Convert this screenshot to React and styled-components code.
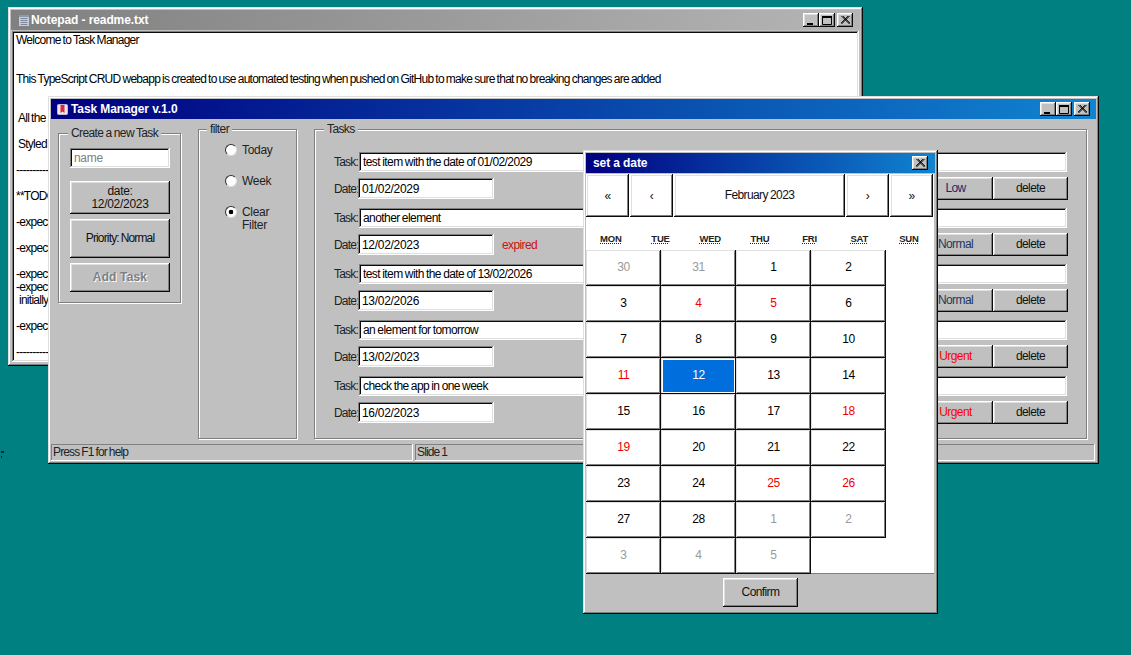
import React from "react";
import styled, { createGlobalStyle, css } from "styled-components";

const raised = css`
  box-shadow: inset -1px -1px #0a0a0a, inset 1px 1px #fff, inset -2px -2px #808080, inset 2px 2px #dfdfdf;
`;

const sunken = css`
  box-shadow: inset -1px -1px #fff, inset 1px 1px #808080, inset -2px -2px #dfdfdf, inset 2px 2px #0a0a0a;
`;

const GlobalStyle = createGlobalStyle`
  html, body {
    margin: 0;
    padding: 0;
    height: 100%;
    overflow: hidden;
  }
  body {
    font-family: "Liberation Sans", Arial, sans-serif;
    font-size: 12px;
    letter-spacing: -0.6px;
    word-spacing: -0.6px;
    color: #000;
  }
  button, input, legend, fieldset {
    font: inherit;
    letter-spacing: inherit;
    word-spacing: inherit;
  }
`;

const Desktop = styled.div`
  position: relative;
  width: 1131px;
  height: 655px;
  background: #008080;
  overflow: hidden;
`;

const Speck = styled.i`
  position: absolute;
  left: 1px;
  top: 451px;
  width: 1px;
  height: 7px;
  border-top: 2px dotted #123;
  border-bottom: 2px solid #123;
  box-sizing: border-box;
`;

const Window = styled.section`
  position: absolute;
  left: ${(p) => p.$x}px;
  top: ${(p) => p.$y}px;
  width: ${(p) => p.$w}px;
  height: ${(p) => p.$h}px;
  box-sizing: border-box;
  padding: 3px;
  display: flex;
  flex-direction: column;
  background: #c0c0c0;
  box-shadow: inset -1px -1px #0a0a0a, inset 1px 1px #dfdfdf, inset -2px -2px #808080, inset 2px 2px #fff;
`;

const TitleBar = styled.header`
  flex: none;
  height: 20px;
  display: flex;
  align-items: center;
  padding: 0 ${(p) => p.$end || 6}px 0 6px;
  background: ${(p) =>
    p.$inactive
      ? "linear-gradient(90deg, #808080, #b5b5b5)"
      : "linear-gradient(90deg, #000080, #1084d0)"};
  color: #fff;
`;

const TitleText = styled.span`
  flex: 1;
  padding-left: ${(p) => p.$inset || 0}px;
  font-weight: bold;
  letter-spacing: -0.1px;
  word-spacing: 0;
  white-space: nowrap;
`;

const NotepadIcon = styled.svg`
  flex: none;
  width: 10px;
  height: 11px;
  margin: 1px 2px 0 2px;
`;

const ManagerIcon = styled.svg`
  flex: none;
  width: 11px;
  height: 11px;
  margin-right: 3px;
`;

const ControlGroup = styled.div`
  display: flex;
  align-items: center;
`;

const ControlButton = styled.button`
  width: 16px;
  height: 14px;
  padding: 0;
  margin-left: ${(p) => (p.$close ? "2px" : "0")};
  border: 0;
  display: flex;
  align-items: center;
  justify-content: center;
  background: #c0c0c0;
  ${raised}
`;

const MinIcon = () => (
  <svg width="10" height="9" viewBox="0 0 10 9">
    <rect x="1" y="7" width="6" height="2" fill="#000" />
  </svg>
);

const MaxIcon = () => (
  <svg width="10" height="9" viewBox="0 0 10 9">
    <path d="M0.5 1.5h9v7h-9z" fill="none" stroke="#000" />
    <rect x="0" y="0" width="10" height="2" fill="#000" />
  </svg>
);

const CloseIcon = () => (
  <svg width="9" height="8" viewBox="0 0 9 8">
    <path d="M0.5 0 L8.5 8 M8.5 0 L0.5 8 M1.8 0 L9 7.2 M7.2 0 L0 7.2" stroke="#000" strokeWidth="1" fill="none" />
  </svg>
);

const WindowControls = ({ onlyClose }) => (
  <ControlGroup>
    {!onlyClose && (
      <ControlButton aria-label="minimize">
        <MinIcon />
      </ControlButton>
    )}
    {!onlyClose && (
      <ControlButton aria-label="maximize">
        <MaxIcon />
      </ControlButton>
    )}
    <ControlButton $close={!onlyClose} aria-label="close">
      <CloseIcon />
    </ControlButton>
  </ControlGroup>
);

/* notepad */
const NotepadBody = styled.div`
  flex: 1;
  margin: 1px 1px 1px 1px;
  padding: 3px 4px 0;
  background: #fff;
  overflow: hidden;
  letter-spacing: -0.74px;
  ${sunken}
`;

const NoteLine = styled.div`
  height: 13px;
  line-height: 13px;
  padding-left: ${(p) => p.$indent || 0}px;
  white-space: pre;
`;

const noteLines = [
  ["Welcome to Task Manager"],
  [""],
  [""],
  ["This TypeScript CRUD webapp is created to use automated testing when pushed on GitHub to make sure that no breaking changes are added"],
  [""],
  [""],
  ["All the", 2],
  [""],
  ["Styled", 2],
  [""],
  ["----------------------"],
  [""],
  ["**TODO"],
  [""],
  ["-expect"],
  [""],
  ["-expect"],
  [""],
  ["-expect"],
  ["-expect"],
  ["initially", 3],
  [""],
  ["-expect"],
  [""],
  ["----------------------"],
];

/* task manager */
const ManagerBody = styled.div`
  flex: 1;
  min-height: 0;
  display: flex;
  gap: 17px;
  align-items: stretch;
  padding: 3px 0 5px 7px;
`;

const Group = styled.fieldset`
  margin: 0;
  min-width: 0;
  box-sizing: border-box;
  border: 1px solid #808080;
  box-shadow: 1px 1px 0 #fff, inset 1px 1px 0 #fff;
`;

const GroupLegend = styled.legend`
  margin-left: ${(p) => p.$offset}px;
  padding: 0 3px;
  height: 14px;
  line-height: 14px;
  white-space: nowrap;
  background: #c0c0c0;
  color: #222;
`;

const CreateGroup = styled(Group)`
  align-self: flex-start;
  width: 123px;
  margin-top: 4px;
  padding: 8px 10px 10px 11px;
  display: flex;
  flex-direction: column;
`;

const FilterGroup = styled(Group)`
  width: 99px;
  padding: 8px 0 0 26px;
`;

const TasksGroup = styled(Group)`
  width: 773px;
  padding: 16px 19px 0 19px;
`;

const Field = styled.input`
  box-sizing: border-box;
  display: block;
  border: 0;
  outline: 0;
  height: ${(p) => p.$height || 20}px;
  padding: 0 4px;
  background: #fff;
  color: #000;
  ${sunken}
  &::placeholder {
    color: #808080;
    opacity: 1;
  }
`;

const NameField = styled(Field)`
  width: 100px;
  margin: 0 0 13px;
  letter-spacing: -0.3px;
`;

const Button = styled.button`
  box-sizing: border-box;
  border: 0;
  padding: 0;
  height: ${(p) => p.$height || 23}px;
  width: ${(p) => p.$width || 75}px;
  background: #c0c0c0;
  color: ${(p) => p.$ink || "#111"};
  line-height: 13px;
  text-align: center;
  ${raised}
`;

const SideButton = styled(Button)`
  width: 100px;
  margin-bottom: 5px;
  letter-spacing: ${(p) => (p.$digits ? "-0.3px" : "-0.85px")};
  &:last-child {
    margin-bottom: 0;
  }
`;

const AddButton = styled(SideButton)`
  color: #808080;
  font-weight: bold;
  letter-spacing: 0.15px;
  word-spacing: 0;
  text-shadow: 1px 1px 0 #fff;
`;

const RadioList = styled.div`
  display: flex;
  flex-direction: column;
  gap: 18px;
`;

const RadioRow = styled.label`
  display: flex;
  align-items: flex-start;
  gap: 5px;
  line-height: 13px;
  letter-spacing: -0.3px;
  color: #222;
`;

const RadioDot = styled.input`
  appearance: none;
  flex: none;
  width: 12px;
  height: 12px;
  margin: 0;
  border-radius: 50%;
  border: 1px solid;
  border-color: #303030 #dfdfdf #dfdfdf #303030;
  background: ${(p) =>
    p.$on ? "radial-gradient(circle, #000 0 2px, #fff 2.6px)" : "#fff"};
`;

const RadioText = styled.span`
  width: 36px;
`;

const TaskList = styled.div`
  display: flex;
  flex-direction: column;
  gap: 8px;
`;

const TaskRow = styled.div`
  display: flex;
  flex-direction: column;
  gap: 5px;
`;

const TaskLine = styled.div`
  display: flex;
  align-items: center;
`;

const FieldLabel = styled.label`
  flex: none;
  width: ${(p) => p.$width}px;
  letter-spacing: -0.8px;
  color: #222;
`;

const TaskField = styled(Field)`
  flex: 1;
  min-width: 0;
  letter-spacing: -0.57px;
`;

const DateField = styled(Field)`
  flex: none;
  width: 136px;
  letter-spacing: -0.3px;
`;

const Expired = styled.span`
  margin-left: 8px;
  color: #cc1111;
`;

const RowActions = styled.div`
  margin: 0 -1px 0 auto;
  display: flex;
`;

const StatusBar = styled.footer`
  flex: none;
  height: 17px;
  margin-right: 1px;
  display: flex;
  gap: 2px;
`;

const StatusPanel = styled.div`
  flex: ${(p) => (p.$grow ? "1" : "none")};
  width: ${(p) => (p.$grow ? "auto" : "362px")};
  box-sizing: border-box;
  padding-left: 2px;
  line-height: 17px;
  letter-spacing: -0.85px;
  color: #222;
  box-shadow: inset -1px -1px #fff, inset 1px 1px #808080;
`;

/* date dialog */
const Calendar = styled.div`
  flex: none;
  height: 400px;
  margin: 1px 1px 0 0;
  background: #fff;
  border-bottom: 1px solid #808080;
  box-sizing: border-box;
  display: flex;
  flex-direction: column;
`;

const CalendarNav = styled.nav`
  flex: none;
  height: 43px;
  display: flex;
  gap: 1px;
`;

const NavButton = styled.button`
  flex: none;
  width: ${(p) => (p.$label ? "171px" : "43px")};
  border: 0;
  padding: ${(p) => (p.$label ? "0 0 2px" : "1px 0 0")};
  background: #fff;
  color: #111;
  ${raised}
`;

const WeekRow = styled.div`
  flex: none;
  display: grid;
  grid-template-columns: repeat(7, 49.7px);
  height: 33px;
  align-items: end;
`;

const WeekDay = styled.abbr`
  justify-self: center;
  margin-bottom: 6px;
  font-size: 9.5px;
  font-weight: bold;
  letter-spacing: -0.2px;
  line-height: 11px;
  text-transform: uppercase;
  text-decoration: underline dotted;
  color: #222;
`;

const DayGrid = styled.div`
  display: grid;
  grid-template-columns: repeat(4, 75px);
  grid-auto-rows: 36px;
`;

const DayTile = styled.button`
  border: 0;
  padding: 0 0 3px;
  letter-spacing: -0.4px;
  background: ${(p) => (p.$selected ? "#006edc" : "#fff")};
  color: ${(p) =>
    p.$selected ? "#fff" : p.$weekend ? "#f00000" : p.$muted ? "#999" : "#000"};
  ${(p) =>
    p.$selected
      ? "box-shadow: inset -1px -1px #0a0a0a, inset 1px 1px #dfdfdf, inset -2px -2px #fff, inset 2px 2px #fff;"
      : "box-shadow: inset -1px -1px #0a0a0a, inset 1px 1px #dfdfdf, inset -2px -2px #808080, inset 2px 2px #fff;"}
`;

const DialogFooter = styled.div`
  flex: 1;
  display: flex;
  justify-content: center;
  padding-top: 4px;
`;

const weekDays = ["Mon", "Tue", "Wed", "Thu", "Fri", "Sat", "Sun"];

const days = [
  [30, "muted"], [31, "muted"], [1], [2],
  [3], [4, "weekend"], [5, "weekend"], [6],
  [7], [8], [9], [10],
  [11, "weekend"], [12, "selected"], [13], [14],
  [15], [16], [17], [18, "weekend"],
  [19, "weekend"], [20], [21], [22],
  [23], [24], [25, "weekend"], [26, "weekend"],
  [27], [28], [1, "muted"], [2, "muted"],
  [3, "muted"], [4, "muted"], [5, "muted"],
];

const tasks = [
  { name: "test item with the date of 01/02/2029", date: "01/02/2029", priority: "Low", ink: "#1a2a6a" },
  { name: "another element", date: "12/02/2023", priority: "Normal", ink: "#1f3560", expired: true },
  { name: "test item with the date of 13/02/2026", date: "13/02/2026", priority: "Normal", ink: "#1f3560" },
  { name: "an element for tomorrow", date: "13/02/2023", priority: "Urgent", ink: "#ff0000" },
  { name: "check the app in one week", date: "16/02/2023", priority: "Urgent", ink: "#ff0000" },
];

const NotepadGlyph = () => (
  <NotepadIcon viewBox="0 0 10 11">
    <rect x="0" y="0" width="10" height="11" fill="#c5cfdc" />
    <rect x="0" y="0" width="10" height="2" fill="#8d99ad" />
    <path d="M1.5 3.5h7M1.5 5.5h7M1.5 7.5h7M1.5 9.5h7" stroke="#7d889b" strokeWidth="1" />
  </NotepadIcon>
);

const ManagerGlyph = () => (
  <ManagerIcon viewBox="0 0 11 11">
    <rect x="0.5" y="0.5" width="10" height="10" rx="1" fill="#e9e9ee" stroke="#b9b9d0" />
    <path d="M3.5 1h4v8l-2-1.5-2 1.5z" fill="#e0243a" />
  </ManagerIcon>
);

export default function App() {
  return (
    <Desktop>
      <GlobalStyle />
      <Speck />

      <Window $x={8} $y={7} $w={855} $h={359}>
        <TitleBar $inactive $end={7}>
          <NotepadGlyph />
          <TitleText>Notepad - readme.txt</TitleText>
          <WindowControls />
        </TitleBar>
        <NotepadBody>
          {noteLines.map(([text, indent], i) => (
            <NoteLine key={i} $indent={indent}>
              {text}
            </NoteLine>
          ))}
        </NotepadBody>
      </Window>

      <Window $x={48} $y={96} $w={1051} $h={368}>
        <TitleBar>
          <ManagerGlyph />
          <TitleText>Task Manager v.1.0</TitleText>
          <WindowControls />
        </TitleBar>
        <ManagerBody>
          <CreateGroup>
            <GroupLegend $offset={-2}>Create a new Task</GroupLegend>
            <NameField placeholder="name" />
            <SideButton $height={33} $digits>
              date:
              <br />
              12/02/2023
            </SideButton>
            <SideButton $height={39}>Priority: Normal</SideButton>
            <AddButton $height={29} disabled>
              Add Task
            </AddButton>
          </CreateGroup>

          <FilterGroup>
            <GroupLegend $offset={-18}>filter</GroupLegend>
            <RadioList>
              <RadioRow>
                <RadioDot type="radio" name="filter" />
                <RadioText>Today</RadioText>
              </RadioRow>
              <RadioRow>
                <RadioDot type="radio" name="filter" />
                <RadioText>Week</RadioText>
              </RadioRow>
              <RadioRow>
                <RadioDot type="radio" name="filter" $on />
                <RadioText>Clear Filter</RadioText>
              </RadioRow>
            </RadioList>
          </FilterGroup>

          <TasksGroup>
            <GroupLegend $offset={-10}>Tasks</GroupLegend>
            <TaskList>
              {tasks.map((task) => (
                <TaskRow key={task.name}>
                  <TaskLine>
                    <FieldLabel $width={25}>Task:</FieldLabel>
                    <TaskField defaultValue={task.name} />
                  </TaskLine>
                  <TaskLine>
                    <FieldLabel $width={24}>Date:</FieldLabel>
                    <DateField $height={21} defaultValue={task.date} />
                    {task.expired && <Expired>expired</Expired>}
                    <RowActions>
                      <Button $ink={task.ink}>{task.priority}</Button>
                      <Button>delete</Button>
                    </RowActions>
                  </TaskLine>
                </TaskRow>
              ))}
            </TaskList>
          </TasksGroup>
        </ManagerBody>
        <StatusBar>
          <StatusPanel>Press F1 for help</StatusPanel>
          <StatusPanel $grow>Slide 1</StatusPanel>
        </StatusBar>
      </Window>

      <Window $x={583} $y={150} $w={355} $h={464}>
        <TitleBar $end={7}>
          <TitleText $inset={1}>set a date</TitleText>
          <WindowControls onlyClose />
        </TitleBar>
        <Calendar>
          <CalendarNav>
            <NavButton>«</NavButton>
            <NavButton>‹</NavButton>
            <NavButton $label>February 2023</NavButton>
            <NavButton>›</NavButton>
            <NavButton>»</NavButton>
          </CalendarNav>
          <WeekRow>
            {weekDays.map((day) => (
              <WeekDay key={day} title={day}>
                {day}
              </WeekDay>
            ))}
          </WeekRow>
          <DayGrid>
            {days.map(([day, kind], i) => (
              <DayTile
                key={i}
                $muted={kind === "muted"}
                $weekend={kind === "weekend"}
                $selected={kind === "selected"}
              >
                {day}
              </DayTile>
            ))}
          </DayGrid>
        </Calendar>
        <DialogFooter>
          <Button $height={29}>Confirm</Button>
        </DialogFooter>
      </Window>
    </Desktop>
  );
}
